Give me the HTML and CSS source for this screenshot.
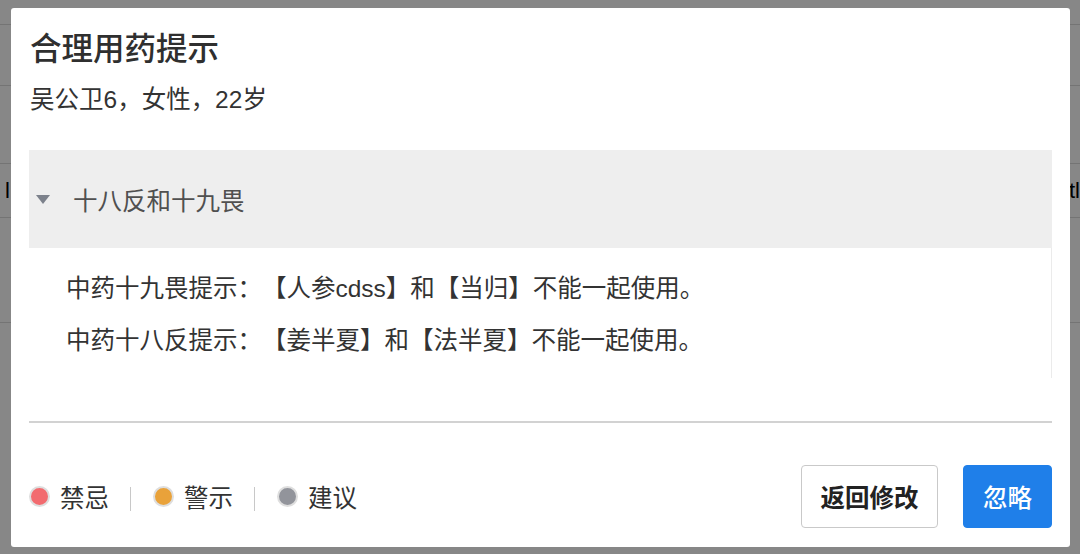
FILE: index.html
```html
<!DOCTYPE html>
<html lang="zh-CN">
<head>
<meta charset="utf-8">
<title>合理用药提示</title>
<link rel="stylesheet" href="styles.css">
</head>
<body>
<div class="page">
  <div class="bg-row r1"></div>
  <div class="bg-row r2"></div>
  <div class="bg-row r3"></div>
  <div class="bg-row r4"><span class="bg-left">l</span><span class="bg-right">tl</span></div>
  <div class="bg-row r5"></div>
</div>
<div class="mask"></div>
<div class="modal">
  <h1 class="title">合理用药提示</h1>
  <div class="patient">吴公卫6，女性，22岁</div>
  <div class="panel">
    <div class="panel-head">
      <svg class="caret" width="14" height="10" viewBox="0 0 14 10"><path d="M0 0 H14 L7 9 Z" fill="#7c818b"/></svg>
      <span class="panel-title">十八反和十九畏</span>
    </div>
    <div class="panel-body">
      <div class="tip">中药十九畏提示：【人参cdss】和【当归】不能一起使用。</div>
      <div class="tip">中药十八反提示：【姜半夏】和【法半夏】不能一起使用。</div>
    </div>
  </div>
  <div class="divider"></div>
  <div class="footer">
    <div class="legend">
      <span class="dot red"></span><span class="legend-text">禁忌</span>
      <span class="sep"></span>
      <span class="dot orange"></span><span class="legend-text">警示</span>
      <span class="sep"></span>
      <span class="dot gray"></span><span class="legend-text">建议</span>
    </div>
    <div class="actions">
      <button class="btn btn-default">返回修改</button>
      <button class="btn btn-primary">忽略</button>
    </div>
  </div>
</div>
</body>
</html>
```
FILE: styles.css
```css
* { box-sizing: border-box; }
html, body { margin: 0; padding: 0; }
body {
  width: 1080px;
  height: 554px;
  overflow: hidden;
  background: #fff;
  font-family: "Liberation Sans", "Noto Sans CJK SC", sans-serif;
  color: #333;
  text-spacing-trim: space-all;
}
.page { width: 1080px; height: 554px; }
.bg-row { border-bottom: 1px solid #dcdcdc; display: flex; align-items: center; justify-content: space-between; font-size: 22px; color: #000; }
.r1 { height: 25px; }
.r2 { height: 61px; }
.r3 { height: 78px; }
.r4 { height: 54px; }
.r5 { height: 105px; }
.bg-left { margin-left: 5px; }
.bg-right { margin-right: 0; }
.mask {
  position: fixed;
  inset: 0;
  background: rgba(0, 0, 0, 0.47);
}
.modal {
  position: fixed;
  left: 11px;
  top: 8px;
  width: 1059px;
  height: 539px;
  background: #fff;
  border-radius: 3px;
  padding: 20px 18px 19px 18px;
  display: flex;
  flex-direction: column;
}
.title {
  margin: 0 0 0 1px;
  font-size: 31.5px;
  line-height: 42px;
  font-weight: 500;
  color: #2f2f2f;
}
.patient {
  margin: 14px 0 0 1px;
  font-size: 24.5px;
  line-height: 32px;
  color: #333;
}
.panel { margin-top: 34px; }
.panel-head {
  height: 98px;
  background: #eeeeee;
  display: flex;
  align-items: center;
  padding-left: 7px;
}
.caret { margin-top: 2px; }
.panel-title {
  margin-left: 23px;
  font-size: 24.5px;
  color: #505050;
}
.panel-body {
  height: 130px;
  border-right: 1px solid #ebebeb;
  padding: 15px 0 0 37px;
}
.tip {
  font-size: 24.5px;
  line-height: 52px;
  color: #333;
  white-space: nowrap;
}
.divider {
  margin-top: 43px;
  height: 2px;
  background: #d2d2d2;
}
.footer {
  margin-top: 42px;
  display: flex;
  justify-content: space-between;
  align-items: center;
}
.legend { display: flex; align-items: center; }
.dot {
  width: 21px;
  height: 21px;
  border-radius: 50%;
  border: 2px solid #dedede;
}
.red { background: #f26b6f; }
.orange { background: #e9a23a; }
.gray { background: #92949b; }
.legend-text { margin-left: 10px; font-size: 24.5px; color: #333; }
.sep { width: 1px; height: 24px; background: #c8c8c8; margin: 4px 22px 0 21px; }
.actions { display: flex; gap: 25px; }
.btn {
  height: 63px;
  border-radius: 4px;
  font-family: "Liberation Sans", "Noto Sans CJK SC", sans-serif;
  font-size: 24.5px;
  cursor: pointer;
  padding: 0;
}
.btn-default {
  width: 137px;
  background: #fff;
  border: 1px solid #c9c9c9;
  color: #222;
  font-weight: 600;
}
.btn-primary {
  width: 89px;
  background: #1f7fe9;
  border: 1px solid #1f7fe9;
  color: #fff;
  font-weight: 500;
}
```
